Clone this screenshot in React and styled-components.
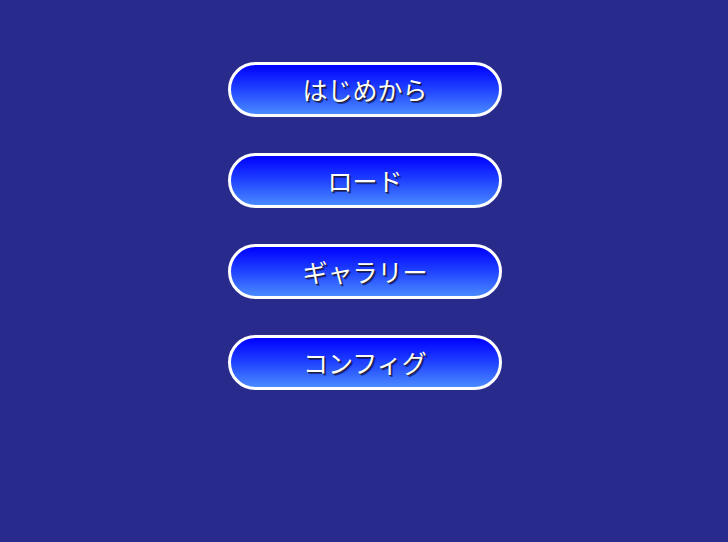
import React from "react";
import styled, { createGlobalStyle } from "styled-components";

const GlobalStyle = createGlobalStyle`
  html, body {
    margin: 0;
    padding: 0;
    background: #292b8c;
    height: 100%;
  }
  #root {
    min-height: 100%;
  }
`;

const Screen = styled.main`
  width: 728px;
  height: 542px;
  background: #292b8c;
  display: flex;
  flex-direction: column;
  align-items: center;
  padding: 62px 0 0 2px;
  box-sizing: border-box;
  gap: 36px;
`;

const MenuButton = styled.button`
  width: 274px;
  height: 55px;
  box-sizing: border-box;
  border: 3px solid #ffffff;
  border-radius: 28px;
  background: linear-gradient(to bottom, #0000ff 0%, #1c3cff 45%, #4a8aff 100%);
  color: #ffffff;
  font-family: "Noto Sans CJK JP", "Noto Sans", sans-serif;
  font-size: 25px;
  font-weight: 400;
  letter-spacing: 0;
  text-shadow: 1px 1px 0 #20203a, 2px 2px 0 rgba(0, 0, 40, 0.5);
  display: flex;
  align-items: center;
  justify-content: center;
  padding: 0 0 1px 0;
  cursor: pointer;
  line-height: 1;
`;

const items = ["はじめから", "ロード", "ギャラリー", "コンフィグ"];

export default function App() {
  return (
    <>
      <GlobalStyle />
      <Screen>
        {items.map((label) => (
          <MenuButton key={label}>{label}</MenuButton>
        ))}
      </Screen>
    </>
  );
}
